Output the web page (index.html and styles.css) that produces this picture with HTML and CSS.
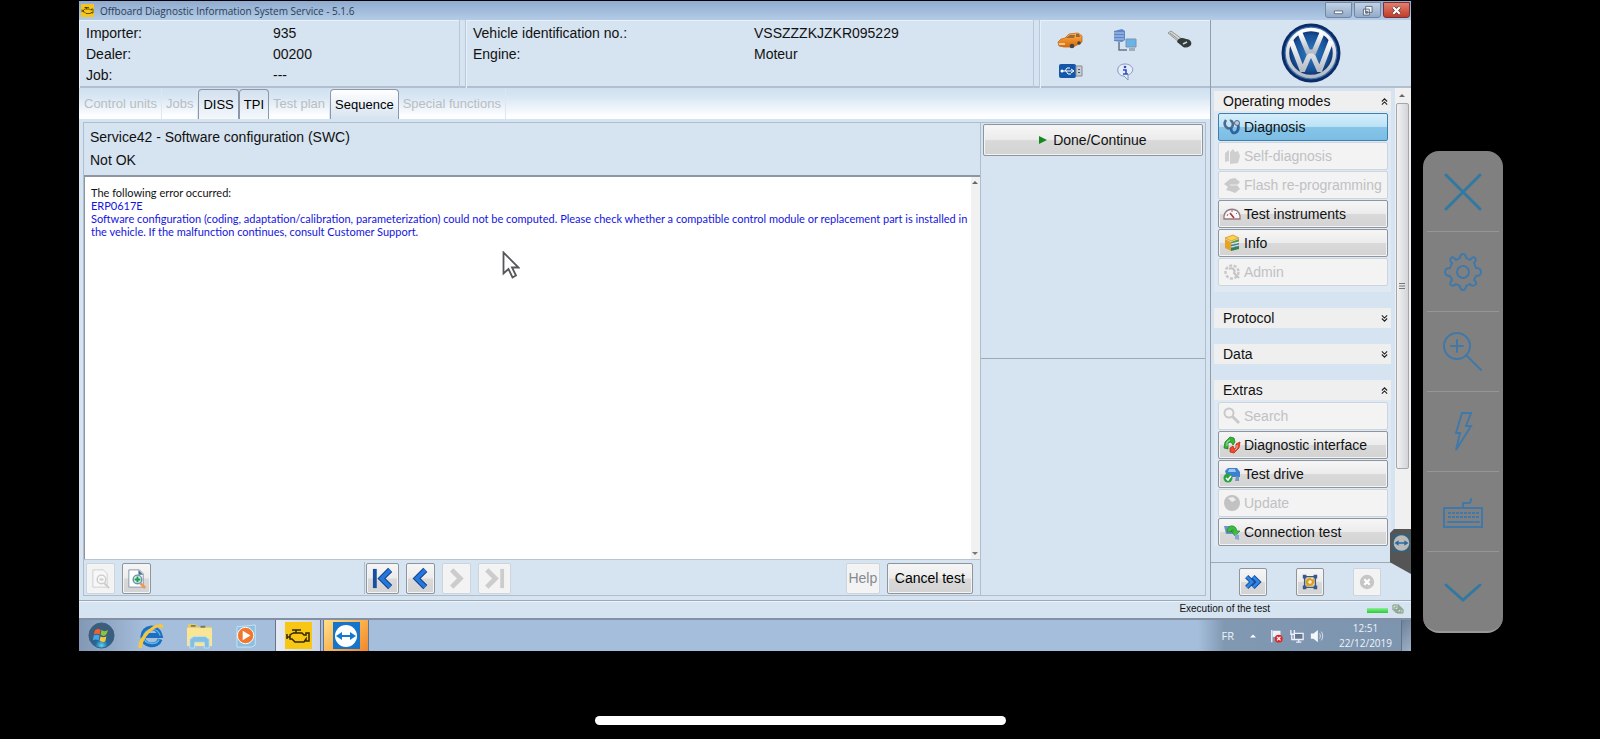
FILE: index.html
```html
<!DOCTYPE html>
<html lang="en">
<head>
<meta charset="utf-8">
<title>Offboard Diagnostic Information System Service</title>
<link rel="stylesheet" href="styles.css">
</head>
<body>
<svg class="defs" aria-hidden="true">
  <defs>
    <linearGradient id="steel" x1="0" y1="0" x2="0" y2="1"><stop offset="0" stop-color="#fff"/><stop offset="1" stop-color="#b4bac4"/></linearGradient>
    <radialGradient id="navy"><stop offset="0" stop-color="#2f7bc4"/><stop offset=".75" stop-color="#175096"/><stop offset="1" stop-color="#0b2b66"/></radialGradient>
    <radialGradient id="orb" cx=".5" cy=".9"><stop offset="0" stop-color="#5fd5f2"/><stop offset=".5" stop-color="#22679d"/><stop offset="1" stop-color="#3c5d7c"/></radialGradient>
    <linearGradient id="orange" x1="0" y1="0" x2="0" y2="1"><stop offset="0" stop-color="#ffb347"/><stop offset="1" stop-color="#d9680c"/></linearGradient>
    <symbol id="engine" viewBox="0 0 24 14"><path d="M7 4h3V1h-3M10 4h6l2 2h2V4h3v8h-3v-2l-2 3H9l-3-3H4V8H1M1 5v5M4 8V6l3-2M6 1h9" fill="none" stroke="currentColor" stroke-width="1.5"/></symbol>
    <symbol id="arrows" viewBox="0 0 24 24"><circle cx="12" cy="12" r="11" fill="#fff"/><path d="M2 12l6-4v3h8V8l6 4-6 4v-3H8v3z" fill="#1679cf"/></symbol>
    <symbol id="up" viewBox="0 0 8 8"><path d="M1 4l3-3 3 3M1 7.500l3-3 3 3" fill="none" stroke="#222" stroke-width="1.300"/></symbol>
    <symbol id="down" viewBox="0 0 8 8"><path d="M1 .5l3 3 3-3M1 4l3 3 3-3" fill="none" stroke="#222" stroke-width="1.300"/></symbol>
  </defs>
</svg>

<div class="stage">
  <main class="desktop">
    <header class="titlebar">
      <span class="app-icon"><svg><use href="#engine"/></svg></span>
      <h1>Offboard Diagnostic Information System Service - 5.1.6</h1>
      <div class="window-buttons">
        <button aria-label="Minimize"><svg viewBox="0 0 12 12"><path d="M1.500 6.500h9v3h-9z" fill="#fff" stroke="#59687c"/></svg></button>
        <button aria-label="Restore"><svg viewBox="0 0 12 12"><path d="M4 1.500h7v6.500H4zM1.500 4.500h6.500v6.500H1.500zM4 7h2v2H4z" fill="#f4f6f9" stroke="#59687c"/></svg></button>
        <button class="close" aria-label="Close"><svg viewBox="0 0 12 12"><path d="M2.500 2.500l7 7M9.500 2.500l-7 7" stroke="#5b3030" stroke-width="4"/><path d="M2.500 2.500l7 7M9.500 2.500l-7 7" stroke="#fff" stroke-width="2.500"/></svg></button>
      </div>
    </header>

    <div class="app">
      <section class="work">
        <div class="facts">
          <dl class="fact-box dealer"><dt>Importer:</dt><dd>935</dd><dt>Dealer:</dt><dd>00200</dd><dt>Job:</dt><dd>---</dd></dl>
          <dl class="fact-box vehicle"><dt>Vehicle identification no.:</dt><dd>VSSZZZKJZKR095229</dd><dt>Engine:</dt><dd>Moteur</dd></dl>
          <div class="fact-box states">
            <svg viewBox="0 0 26 24"><path d="M1 13l3-3 4-1 4-4 9-1 4 3v6l-3 2-6 3H7l-5-1z" fill="url(#orange)" stroke="#c56a20" stroke-width=".8"/><path d="M9 9l4-3h5l-1 3z" fill="#9a6a3c"/><path d="M19 5l3 0 1 3h-4z" fill="#9a6436"/><circle cx="15" cy="17" r="2.300" fill="#444"/><circle cx="22" cy="14" r="1.800" fill="#444"/><path d="M2 15h6" stroke="#ffe19a" stroke-width="1.500"/></svg>
            <svg viewBox="0 0 26 24"><path d="M2 2l8-2 3 2v9l-3 2-8-1z" fill="#5e86c9"/><path d="M2 4h10M2 7h10M2 10h10" stroke="#b5cdf0" stroke-width="1"/><path d="M7 13v8h8" fill="none" stroke="#66758a" stroke-width="1.500"/><path d="M14 10h10v8H14z" fill="#68b4e6" stroke="#7e93ad"/><path d="M17 19h6v3h-6z" fill="#a3adba"/></svg>
            <svg viewBox="0 0 26 24"><path d="M1 4l3-2 11 8-3 3z" fill="#d8d9d4" stroke="#85857d" stroke-width=".8"/><path d="M3 4l9 7" stroke="#777" stroke-width=".8"/><path d="M10 13c1-4 5-5 9-3 5 0 7 5 4 7-3 2-6 2-8 0z" fill="#343b3d"/><path d="M16 15l4-2" stroke="#cfd6d6" stroke-width="1.500"/></svg>
            <svg viewBox="0 0 26 24"><rect x="2" y="5" width="17" height="14" rx="2" fill="#1456a8"/><path d="M19 7h6v10h-6z" fill="#c6cbd0" stroke="#858d96"/><path d="M21 10h2v1h-2zM21 13h2v1h-2z" fill="#555"/><path d="M4 12h12M8 12l2-3h3M9 12l2 3h3M14 10l3 2-3 2" stroke="#fff" fill="none"/><circle cx="5" cy="12" r="1.500" fill="#fff"/></svg>
            <svg viewBox="0 0 26 24"><path d="M13 5C3 5 4 17 12 17l4 4v-5c8-3 5-11-3-11z" fill="#e6ecfb" stroke="#8895bd"/><circle cx="13" cy="8" r="1.300" fill="#2d50c0"/><path d="M11 11h3v4M11 15h5" stroke="#2d50c0" stroke-width="1.600" fill="none"/></svg>
          </div>
        </div>

        <nav class="tabs">
          <button disabled>Control units</button><button disabled>Jobs</button><button class="open">DISS</button><button class="open">TPI</button><button disabled>Test plan</button><button class="open current">Sequence</button><button disabled>Special functions</button>
        </nav>

        <div class="panes">
          <section class="result">
            <div class="result-head"><p>Service42 - Software configuration (SWC)</p><p>Not OK</p></div>
            <div class="result-body">
              <div class="message">
                <p>The following error occurred:</p>
                <p class="error">ERP0617E</p>
                <p class="error">Software configuration (coding, adaptation/calibration, parameterization) could not be computed. Please check whether a compatible control module or replacement part is installed in the vehicle. If the malfunction continues, consult Customer Support.</p>
              </div>
              <div class="rail"><i class="tri-up"></i><i class="tri-down"></i></div>
              <svg class="cursor" viewBox="0 0 18 28"><path d="M1.500 1.500v21l5-4.500 4 8.500 3.500-2-4-8h6.500z" fill="#fff" stroke="#55575c" stroke-width="1.800"/></svg>
            </div>
            <footer class="result-foot">
              <div class="zoomers">
                <button class="btn square" disabled aria-label="Zoom out"><svg viewBox="0 0 20 24"><path d="M2 3h11l4 4v14H2z" fill="#f7f7f7" stroke="#cfcfcf"/><circle cx="11" cy="13" r="4.500" fill="none" stroke="#ccc" stroke-width="1.500"/><path d="M9 13h4M14 17l5 5" stroke="#ccc" stroke-width="2"/></svg></button>
                <button class="btn square" aria-label="Zoom in"><svg viewBox="0 0 20 24"><path d="M2 3h11l4 4v14H2z" fill="#fff" stroke="#8495ab"/><path d="M12 3v5h5" fill="#4c6c94"/><path d="M14 17l5 5" stroke="#ee9a5d" stroke-width="3"/><circle cx="11" cy="13" r="4.500" fill="#d8f0e6" stroke="#6797a3" stroke-width="1.500"/><path d="M8 13h6M11 10v6" stroke="#1e9a5f" stroke-width="2"/></svg></button>
              </div>
              <div class="steps">
                <button class="btn wide" aria-label="First"><svg viewBox="0 0 24 24"><path d="M4 2v20" stroke="#164f9f" stroke-width="4"/><path d="M20 3l-9 9 9 9" fill="none" stroke="#123f86" stroke-width="6"/><path d="M20 3l-9 9 9 9" fill="none" stroke="#2478dc" stroke-width="4"/></svg></button>
                <button class="btn square" aria-label="Previous"><svg viewBox="0 0 24 24"><path d="M17 3l-9 9 9 9" fill="none" stroke="#123f86" stroke-width="6"/><path d="M17 3l-9 9 9 9" fill="none" stroke="#2478dc" stroke-width="4"/></svg></button>
                <button class="btn square" disabled aria-label="Next"><svg viewBox="0 0 24 24"><path d="M7 3l9 9-9 9" fill="none" stroke="#ccc" stroke-width="5"/></svg></button>
                <button class="btn wide" disabled aria-label="Last"><svg viewBox="0 0 24 24"><path d="M4 3l9 9-9 9" fill="none" stroke="#ccc" stroke-width="5"/><path d="M20 2v20" stroke="#ccc" stroke-width="4"/></svg></button>
              </div>
              <div class="finish"><button class="btn help" disabled>Help</button><button class="btn cancel">Cancel test</button></div>
            </footer>
          </section>
          <aside class="actions">
            <div class="action-top"><button class="btn done"><svg viewBox="0 0 8 8"><path d="M0 0l8 4-8 4z" fill="#128a1c"/></svg>Done/Continue</button></div>
            <div class="action-rest"></div>
          </aside>
        </div>
      </section>

      <aside class="side">
        <div class="logo">
          <svg viewBox="0 0 60 60" role="img" aria-label="Volkswagen"><circle cx="30" cy="30" r="29.500" fill="#0c2c68"/><circle cx="30" cy="30" r="26.500" fill="#3f73ac"/><circle cx="30" cy="30" r="23.500" fill="url(#navy)" stroke="url(#steel)" stroke-width="3.500"/><path d="M19 10l8 19h6l8-19" fill="none" stroke="url(#steel)" stroke-width="5"/><path d="M10 18l11.500 30L28 33h4l6.500 15L50 18" fill="none" stroke="url(#steel)" stroke-width="5" stroke-linejoin="bevel"/></svg>
        </div>
        <div class="side-scroll">
          <div class="groups">
            <section class="group">
              <h2>Operating modes<svg><use href="#up"/></svg></h2>
              <div class="group-list">
                <button class="btn item active"><svg viewBox="0 0 18 18"><path d="M3 2c-4 6 3 11 6 7 2-3 0-7-2-6" fill="none" stroke="#4d6a8c" stroke-width="2.600"/><path d="M8 10c0 8 9 6 7-4" fill="none" stroke="#2e639e" stroke-width="2.800"/><circle cx="14" cy="5" r="2.500" fill="#bccbdc" stroke="#52697f"/></svg>Diagnosis</button>
                <button class="btn item" disabled><svg viewBox="0 0 18 18"><path d="M2 6l4-3v11l-4 1zM7 5l3-3 2 3 3-1 2 5-2 7-8 1z" fill="#cfcfcf"/></svg>Self-diagnosis</button>
                <button class="btn item" disabled><svg viewBox="0 0 18 18"><path d="M1 8l6-5 5-1 5 4-3 3 3 4-5 4-5-2-4-1 2-3z" fill="#cacaca"/><path d="M7 9h7" stroke="#eee"/></svg>Flash re-programming</button>
                <button class="btn item"><svg viewBox="0 0 18 18"><path d="M1 14V11C3 2 15 2 17 11v3z" fill="#fbf7f7" stroke="#927b80" stroke-width="1.300"/><path d="M4 11l1-2M9 7V5M13 9l1-1" stroke="#777"/><path d="M11 13L7 8" stroke="#b42d42" stroke-width="1.600"/></svg>Test instruments</button>
                <button class="btn item"><svg viewBox="0 0 18 18"><path d="M2 4l8-3 6 3-8 3z" fill="#ffd04c" stroke="#c48b1e" stroke-width=".7"/><path d="M2 5v9l6 3V8z" fill="#e6a326"/><path d="M8 8l8-3v3l-8 3z" fill="#5d9d3c"/><path d="M8 11l8-2v3l-8 2z" fill="#3d7aae"/><path d="M8 14l8-2v3l-8 2z" fill="#328150"/><path d="M8 10l8-2M8 13l8-2" stroke="#eee"/></svg>Info</button>
                <button class="btn item" disabled><svg viewBox="0 0 18 18"><circle cx="9" cy="9" r="6.500" fill="none" stroke="#c9c9c9" stroke-width="2.500" stroke-dasharray="3 1.500"/><path d="M6 6c3-2 7 1 5 4l5 5" fill="none" stroke="#c4c4c4" stroke-width="2"/></svg>Admin</button>
              </div>
            </section>
            <section class="group"><h2>Protocol<svg><use href="#down"/></svg></h2></section>
            <section class="group"><h2>Data<svg><use href="#down"/></svg></h2></section>
            <section class="group">
              <h2>Extras<svg><use href="#up"/></svg></h2>
              <div class="group-list">
                <button class="btn item" disabled><svg viewBox="0 0 18 18"><circle cx="6" cy="6" r="4.500" fill="none" stroke="#c9c9c9" stroke-width="2"/><path d="M9 9l7 7" stroke="#c9c9c9" stroke-width="3"/></svg>Search</button>
                <button class="btn item"><svg viewBox="0 0 18 18"><path d="M1 12l1-6 5-5 4 1 1 4-2 3-2-3-3 1v6z" fill="#35b637" stroke="#16761b" stroke-width=".7"/><path d="M17 6l-1 6-5 5-4-1 0-4 3-2 1 3 2-1 0-4z" fill="#f2492d" stroke="#b2200f" stroke-width=".7"/><path d="M4 10V6l3-2M14 9v3l-2 2" fill="none" stroke="#fff" stroke-opacity=".6"/></svg>Diagnostic interface</button>
                <button class="btn item"><svg viewBox="0 0 18 18"><path d="M2 6l3-3h9l3 4v5H4z" fill="#3d7fd0"/><path d="M6 4h6l1 3H5z" fill="#9bc5ef"/><path d="M13 11l3 1v4h-4z" fill="#7897bd"/><circle cx="5" cy="13" r="4.500" fill="#2aa443"/><path d="M3 13l2 2 3-4" fill="none" stroke="#fff" stroke-width="1.500"/></svg>Test drive</button>
                <button class="btn item" disabled><svg viewBox="0 0 18 18"><circle cx="9" cy="9" r="8" fill="#c2c2c2"/><path d="M5 4l5-1 3 3-4 2z" fill="#ededed"/></svg>Update</button>
                <button class="btn item"><svg viewBox="0 0 18 18"><path d="M1 3h8l2 8H3z" fill="#6d94cc"/><path d="M4 9c0-8 9-8 10-1h3l-5 5-4-5h3c-1-2-3-1-3 1z" fill="#3fbc42" stroke="#1b7d24" stroke-width=".6"/><path d="M12 11l4 1v5l-4-1z" fill="#85a7d6"/></svg>Connection test</button>
              </div>
            </section>
          </div>
          <div class="scrollbar"><i class="tri-up"></i><div class="thumb"><svg viewBox="0 0 8 8"><path d="M1 1.500h6M1 4h6M1 6.500h6" stroke="#777"/></svg></div></div>
        </div>
        <div class="side-tools">
          <button class="btn square" aria-label="Forward"><svg viewBox="0 0 20 20"><path d="M3 4l6 6-6 6M10 4l6 6-6 6" fill="none" stroke="#174c9a" stroke-width="5"/><path d="M3 4l6 6-6 6M10 4l6 6-6 6" fill="none" stroke="#2f86e4" stroke-width="3"/></svg></button>
          <button class="btn square" aria-label="Fit"><svg viewBox="0 0 20 20"><path d="M4 4h12v12H4z" fill="#efe1b4" stroke="#36588d" stroke-width="1.500"/><path d="M10 5l2 2h3v3l-2 4-6 1-2-4 1-4z" fill="#dc9d28"/><circle cx="10" cy="10" r="2" fill="#fff3c9"/><path d="M2 2h4v4H2zM14 2h4v4h-4zM2 14h4v4H2zM14 14h4v4h-4z" fill="#36588d"/></svg></button>
          <button class="btn square" disabled aria-label="Cancel"><svg viewBox="0 0 20 20"><circle cx="10" cy="10" r="8" fill="#c6c6c6"/><path d="M7 7l6 6M13 7l-6 6" stroke="#fff" stroke-width="2.500"/></svg></button>
        </div>
        <div class="tv-tab"><svg><use href="#arrows"/></svg></div>
      </aside>
    </div>

    <div class="status"><span>Execution of the test</span><i class="led"></i><svg viewBox="0 0 12 10"><path d="M1 1h6v5H1zM3 3h6v5H3zM5 5h6v4H5z" fill="#dcebdc" stroke="#7d957f"/></svg></div>

    <footer class="taskbar">
      <div class="launch">
        <button aria-label="Start"><svg viewBox="0 0 28 28"><circle cx="14" cy="14" r="13" fill="url(#orb)" stroke="#365f86"/><path d="M7 9c2-2 4-2 6-1l-1 5c-2-1-4-1-6 0z" fill="#f0602c"/><path d="M14 8c2 2 4 2 7 0l-2 5c-2 2-4 2-6 0z" fill="#8ac43f"/><path d="M6 14c2-1 4-1 6 0l-1 5c-2-1-4-1-6 0z" fill="#45a5e9"/><path d="M13 15c2 1 4 1 6 0l-1 5c-2 1-4 1-6-1z" fill="#fac936"/></svg></button>
        <button aria-label="Internet Explorer"><svg viewBox="0 0 28 28"><path d="M24 18c-3 9-18 7-18-3S21 2 24 14H9" fill="none" stroke="#1b6fc0" stroke-width="5"/><path d="M23 18c-3 7-16 5-16-3S21 4 24 14" fill="none" stroke="#59b4ed" stroke-width="1.500"/><path d="M2 27C-1 20 13 2 25 2c3 1 2 4 1 6-1-8-19 3-21 19z" fill="#f7c63f"/></svg></button>
        <button aria-label="Explorer"><svg viewBox="0 0 28 28"><path d="M2 2h8l2 3h14v20H2z" fill="#e9c969"/><path d="M1 6h26v19H1z" fill="#f8e596"/><path d="M5 4h5M15 5h5" stroke="#6f8065" stroke-width="2"/><path d="M4 27v-9l4-3h12l4 3v9h-5v-6H9v6z" fill="#82bfe2" stroke="#bde0f2"/></svg></button>
        <button aria-label="Media Player"><svg viewBox="0 0 28 28"><path d="M2 5l19-2v21l-4 2H2z" fill="#8bc0e4" stroke="#c7e3f5"/><circle cx="11" cy="14" r="8.500" fill="#f0772c" stroke="#fff"/><path d="M8 9l8 5-8 5z" fill="#fff"/></svg></button>
      </div>
      <button class="task odis" aria-label="ODIS"><span><svg><use href="#engine"/></svg></span></button>
      <button class="task viewer" aria-label="TeamViewer"><span><svg><use href="#arrows"/></svg></span></button>
      <div class="tray">
        <span>FR</span>
        <svg class="tiny" viewBox="0 0 8 8"><path d="M0 6l4-4 4 4z" fill="#fff"/></svg>
        <div class="tray-icons">
          <svg viewBox="0 0 16 16"><path d="M2 1v14" stroke="#eef" stroke-width="1.500"/><path d="M3 2h9v7H3z" fill="#eef2f7"/><circle cx="10" cy="11" r="4.500" fill="#d92a2a"/><path d="M8 9l4 4M12 9l-4 4" stroke="#fff" stroke-width="1.500"/></svg>
          <svg viewBox="0 0 16 16"><path d="M5 5h10v7H5z" fill="#64788f" stroke="#eef" stroke-width="1.500"/><path d="M7 15h6M10 12v3M2 6v6h3M1 1v5h4V1" fill="none" stroke="#eef" stroke-width="1.500"/></svg>
          <svg viewBox="0 0 16 16"><path d="M1 5h3l5-4v14l-5-4H1z" fill="#f4f7fa"/><path d="M11 5c1 2 1 4 0 6M13 3c2 3 2 7 0 10" fill="none" stroke="#e1e8f0"/></svg>
        </div>
        <div class="clock"><time>12:51</time><time>22/12/2019</time></div>
        <i class="peek"></i>
      </div>
    </footer>
  </main>

  <nav class="remote">
    <button aria-label="Close session"><svg viewBox="0 0 40 40"><path d="M3 3l34 34M37 3L3 37" stroke-width="3" stroke="#33789f"/></svg></button>
    <button aria-label="Settings"><svg viewBox="0 0 40 40"><circle cx="20" cy="20" r="6"/><path d="M17 6q0-4 3-4t3 4l4 2q3-4 5-2t-1 5l2 5q5 0 5 4t-5 4l-2 4q4 3 1 5t-5-1l-4 2q0 4-3 4t-3-4l-4-2q-3 3-5 1t1-5l-2-4q-5 0-5-4t5-4l2-5q-3-3-1-5t5 2z"/></svg></button>
    <button aria-label="Zoom"><svg viewBox="0 0 40 40"><circle cx="14" cy="14" r="13"/><path d="M14 8v12M8 14h12M23 23l15 15"/></svg></button>
    <button aria-label="Actions"><svg viewBox="0 0 40 40"><path d="M19 1h9l-5 13h5L13 38l4-17h-4z"/></svg></button>
    <button aria-label="Keyboard"><svg viewBox="0 0 40 40"><path d="M1 16h38v19H1zM20 16v-5h6c2 0 2-2 2-4"/><path d="M5 21h31M5 25h31" stroke-dasharray="3 1" stroke-linecap="butt"/><path d="M5 30h25M32 30h4"/></svg></button>
    <button aria-label="Collapse"><svg viewBox="0 0 40 40"><path d="M3 13l17 15 17-15" stroke-width="3" stroke="#33789f"/></svg></button>
  </nav>
</div>
<div class="home"><i></i></div>
</body>
</html>
```

FILE: styles.css
```css
* { box-sizing: border-box; }
body { margin: 0; min-height: 100vh; display: flex; flex-direction: column; background: #000; color: #111; font: 14px/21px "Liberation Sans", Arial, sans-serif; }
h1, h2, p, dl, dd { margin: 0; font-weight: normal; }
button { font: inherit; color: inherit; padding: 0; border: 0; background: none; }
svg { display: block; }
.defs { position: absolute; width: 0; height: 0; }

.stage { flex: 1; display: flex; gap: 12px; padding: 1px 97px 0 79px; }
.desktop { flex: 1; min-width: 0; display: flex; flex-direction: column; background: #d6e3f0; }

.titlebar { height: 19px; display: flex; align-items: center; gap: 6px; padding-left: 2px; background: linear-gradient(#8fabcf, #b3cbe6); color: #2a3d55; }
.titlebar h1 { flex: 1; font: 10px/16px "Open Sans", "Noto Sans", sans-serif; }
.app-icon { width: 13px; height: 13px; padding: 3px 0; background: #f7c61a; color: #3b2f00; }
.app-icon svg { width: 13px; height: 7px; }
.window-buttons { display: flex; gap: 2px; align-self: flex-start; padding: 1px 1px 0 0; }
.window-buttons button { width: 27px; height: 16px; display: grid; place-items: center; border: 1px solid #7387a3; border-radius: 0 0 3px 3px; background: linear-gradient(#c3d2e5, #93abc9); }
.window-buttons .close { border-color: #74323a; background: linear-gradient(#e0806e, #c23c28); }
.window-buttons svg { width: 11px; height: 11px; }

.app { flex: 1; display: flex; min-height: 0; border-bottom: 1px solid #9aa8ba; }
.work { flex: 1; min-width: 0; display: flex; flex-direction: column; }
.facts { height: 68px; display: grid; grid-template-columns: 381fr 569fr 171fr; gap: 5px; border-bottom: 2px solid #b3bfcf; }
.fact-box { border: 1px solid #b9c7d8; border-width: 0 1px; box-shadow: inset 1px 1px #e8f0f8; }
dl.fact-box { display: grid; grid-auto-rows: 21px; align-content: start; padding: 3px 7px; }
.dealer { grid-template-columns: 187px 1fr; }
dl.dealer { border-left: 0; }
.vehicle { grid-template-columns: 281px 1fr; }
.states { display: grid; grid-template-columns: repeat(3, 26px); grid-template-rows: 24px 24px; gap: 6px 29px; align-content: center; padding: 3px 0 0 17px; border-right: 0; }
.states svg { width: 26px; height: 24px; }

.tabs { height: 31px; display: flex; padding: 1px 0 0 1px; background: linear-gradient(#cfe0f0, #d9e7f4 30%, #fdfeff 90%); font-size: 13px; }
.tabs button { padding: 0 4px; border-right: 1px solid #dfe6ee; line-height: 28px; }
.tabs button:disabled { color: #b9bdc2; }
.tabs .open { border: 1px solid #8c97a8; border-width: 1px 1px 0; border-radius: 4px 4px 0 0; background: linear-gradient(#d3e0ee, #f4f8fc); padding: 0 4px; color: #000; }
.tabs .current { background: linear-gradient(#fff, #d6e3f0); }

.panes { flex: 1; display: flex; padding: 3px 4px 4px; min-height: 0; }
.result { flex: 899; min-width: 0; display: flex; flex-direction: column; border: 1px solid #b0bdcd; }
.result-head { height: 54px; padding: 3px 6px; line-height: 23px; border-bottom: 2px solid #8d96a2; }
.result-body { flex: 1; position: relative; display: flex; border-left: 1px solid #8d96a2; background: #fff; }
.message { flex: 1; padding: 9px 0 9px 6px; font-family: Lato, "Liberation Sans", sans-serif; font-size: 11px; line-height: 13px; }
.error { color: #1414e0; }
.rail { width: 9px; display: flex; flex-direction: column; justify-content: space-between; align-items: center; padding: 4px 0; background: #f1f1f1; }
.tri-up, .tri-down { border: 3px solid transparent; }
.tri-up { border-top: 0; border-bottom-color: #666; }
.tri-down { border-bottom: 0; border-top-color: #777; }
.cursor { position: absolute; left: 417px; top: 74px; width: 18px; height: 28px; }
.result-foot { display: flex; justify-content: space-between; height: 36px; padding: 2px 7px 1px 2px; border-top: 1px solid #b9c4d1; }
.result-foot > div { display: flex; align-items: center; }
.zoomers { gap: 7px; flex: 278; }
.steps { gap: 7px; flex: 481; padding-left: 1px; border-left: 1px solid #b0bdcd; }
.finish { gap: 7px; }

.btn { border: 1px solid #8f959d; border-radius: 2px; background: linear-gradient(#f6f6f6, #ececec 48%, #d9d9d9 52%, #d3d3d3); box-shadow: inset 0 0 0 1px #f4f4f4; }
.btn:disabled { background: #f3f3f3; border-color: #ced4dc; color: #bfc1c4; }
.square, .wide { display: grid; place-items: center; width: 29px; height: 31px; }
.wide { width: 33px; }
.square svg, .wide svg { width: 23px; height: 23px; }
.help, .cancel { height: 31px; }
.help { width: 34px; }
.help:disabled { color: #858a90; }
.cancel { width: 86px; color: #000; }

.actions { flex: 225; min-width: 0; display: flex; flex-direction: column; border-right: 1px solid #b0bdcd; }
.action-top { flex: 1 1 50%; border-top: 1px solid #b0bdcd; padding: 1px 2px; border-bottom: 1px solid #9fa9b6; }
.action-rest { flex: 1 1 50%; border-bottom: 1px solid #b0bdcd; }
.done { width: 100%; height: 32px; display: flex; align-items: center; justify-content: center; gap: 6px; }
.done svg { width: 8px; height: 8px; }

.side { width: 201px; position: relative; display: flex; flex-direction: column; border-left: 1px solid #929daa; }
.logo { height: 68px; display: grid; place-items: center; border-bottom: 2px solid #b3bfcf; }
.logo svg { width: 60px; height: 60px; }
.side-scroll { flex: 1; display: flex; min-height: 0; }
.groups { flex: 1; min-width: 0; display: flex; flex-direction: column; gap: 16px; padding: 3px 4px 0 3px; }
.group h2 { height: 20px; display: flex; align-items: center; justify-content: space-between; padding: 0 3px 0 9px; background: #efefef; font-size: 14px; line-height: 20px; }
.group h2 svg { width: 7px; height: 7px; }
.group-list { display: flex; flex-direction: column; gap: 1px; padding: 2px 3px 6px 4px; background: #dfe9f3; }
.group:last-child .group-list { padding-bottom: 0; }
.item { height: 28px; display: flex; align-items: center; gap: 3px; padding-left: 4px; white-space: nowrap; }
.item svg { width: 18px; height: 18px; }
.item.active { border-color: #3f7fae; background: linear-gradient(#d6eefb, #bbe2f7 48%, #86c5e9 52%, #7dbde4); box-shadow: none; }
.scrollbar { width: 16px; display: flex; flex-direction: column; align-items: center; gap: 6px; padding: 6px 2px 0 0; background: #f0f0f0; }
.thumb { width: 13px; height: 366px; display: grid; place-items: center; border: 1px solid #a3a7ad; border-radius: 2px; background: linear-gradient(90deg, #f2f2f2, #d2d4d8); }
.thumb svg { width: 8px; height: 8px; }
.side-tools { height: 38px; display: flex; align-items: center; justify-content: space-between; padding: 0 30px 0 28px; border-top: 1px solid #9fa9b6; }
.side-tools .btn { width: 28px; height: 28px; }
.side-tools svg { width: 18px; height: 18px; }
.tv-tab { position: absolute; right: 0; bottom: 26px; width: 21px; height: 45px; padding: 5px 1px 0 3px; background: #555; clip-path: polygon(4px 0, 100% 0, 100% 100%, 0 74%, 0 4px); }
.tv-tab svg { width: 17px; height: 18px; background: #28678f; opacity: .6; }

.status { height: 17px; display: flex; align-items: center; justify-content: flex-end; padding: 0 7px 2px 0; font-size: 10px; line-height: 14px; border-top: 1px solid #eef4fa; }
.led { width: 21px; height: 5px; margin: 3px 4px 0 97px; background: linear-gradient(#8cf08e, #27c93c); }
.status svg { width: 12px; height: 10px; }

.taskbar { height: 33px; display: flex; border-top: 2px solid #8491a4; background: linear-gradient(90deg, #8298b4, #a5bedb 5%, #a5bedb 84%, #8198b2 86%, #7d94af); }
.launch { display: flex; align-items: center; gap: 22px; padding: 0 13px 0 9px; }
.launch svg { width: 27px; height: 27px; }
.task { width: 46px; display: grid; place-items: center; border: 1px solid #66758a; border-width: 0 1px; margin-right: 2px; }
.task span { width: 27px; height: 27px; display: grid; place-items: center; }
.odis { background: linear-gradient(90deg, #e6ebf3, #cad4e6); }
.odis span { background: #f8c713; color: #302600; }
.odis svg { width: 24px; height: 14px; }
.viewer { background: linear-gradient(135deg, #ffdf8b, #f7a23d 70%, #ee8734); }
.viewer span { background: #1674ca; }
.viewer svg { width: 24px; height: 24px; }
.tray { margin-left: auto; display: flex; align-items: center; color: #eef3f8; font: 11px/15px "Open Sans", "Noto Sans", sans-serif; }
.tiny { width: 6px; height: 8px; margin: 0 14px 0 16px; }
.tray-icons { display: flex; gap: 6px; margin-right: 15px; }
.tray-icons svg { width: 14px; height: 14px; }
.clock { display: flex; flex-direction: column; align-items: center; font-size: 10px; }
.peek { align-self: stretch; width: 10px; margin-left: 9px; border-left: 1px solid #5f738b; background: linear-gradient(135deg, #6c819b, #9fb0c4); }

.remote { width: 80px; height: 482px; margin-top: 150px; display: flex; flex-direction: column; padding: 1px 4px 0; border-radius: 16px; background: #808080; border-bottom: 2px solid #999; }
.remote button { flex: 1; display: grid; place-items: center; border-bottom: 1px solid #969696; }
.remote button:last-child { border: 0; }
.remote svg { width: 40px; height: 40px; fill: none; stroke: #4079a9; stroke-width: 2; stroke-linecap: round; }

.home { height: 88px; display: flex; justify-content: center; align-items: flex-end; padding-bottom: 14px; }
.home i { width: 411px; height: 9px; border-radius: 5px; background: #fff; }
```
